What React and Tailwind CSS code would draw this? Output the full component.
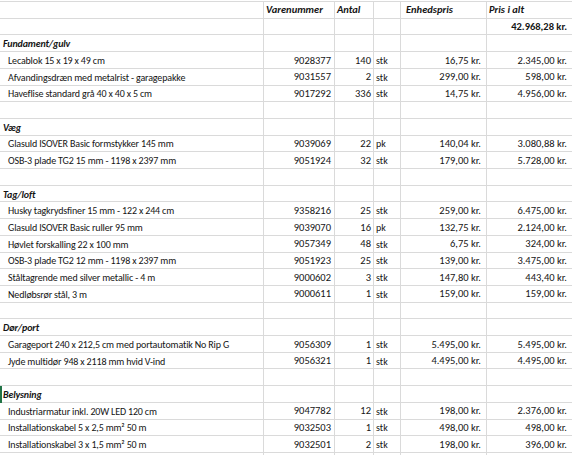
import React from "react";

const rows = [
  { t: "header" },
  { t: "total" },
  { t: "sec", name: "Fundament/gulv" },
  { t: "item", d: ["Lecablok 15 x 19 x 49 cm", "9028377", "140", "stk", "16,75 kr.", "2.345,00 kr."] },
  { t: "item", d: ["Afvandingsdræn med metalrist - garagepakke", "9031557", "2", "stk", "299,00 kr.", "598,00 kr."] },
  { t: "item", d: ["Haveflise standard grå 40 x 40 x 5 cm", "9017292", "336", "stk", "14,75 kr.", "4.956,00 kr."] },
  { t: "empty" },
  { t: "sec", name: "Væg" },
  { t: "item", d: ["Glasuld ISOVER Basic formstykker 145 mm", "9039069", "22", "pk", "140,04 kr.", "3.080,88 kr."] },
  { t: "item", d: ["OSB-3 plade TG2 15 mm - 1198 x 2397 mm", "9051924", "32", "stk", "179,00 kr.", "5.728,00 kr."] },
  { t: "empty" },
  { t: "sec", name: "Tag/loft" },
  { t: "item", d: ["Husky tagkrydsfiner 15 mm - 122 x 244 cm", "9358216", "25", "stk", "259,00 kr.", "6.475,00 kr."] },
  { t: "item", d: ["Glasuld ISOVER Basic ruller 95 mm", "9039070", "16", "pk", "132,75 kr.", "2.124,00 kr."] },
  { t: "item", d: ["Høvlet forskalling 22 x 100 mm", "9057349", "48", "stk", "6,75 kr.", "324,00 kr."] },
  { t: "item", d: ["OSB-3 plade TG2 12 mm - 1198 x 2397 mm", "9051923", "25", "stk", "139,00 kr.", "3.475,00 kr."] },
  { t: "item", d: ["Ståltagrende med silver metallic - 4 m", "9000602", "3", "stk", "147,80 kr.", "443,40 kr."] },
  { t: "item", d: ["Nedløbsrør stål, 3 m", "9000611", "1", "stk", "159,00 kr.", "159,00 kr."] },
  { t: "empty" },
  { t: "sec", name: "Dør/port" },
  { t: "item", d: ["Garageport 240 x 212,5 cm med portautomatik No Rip G", "9056309", "1", "stk", "5.495,00 kr.", "5.495,00 kr."] },
  { t: "item", d: ["Jyde multidør 948 x 2118 mm hvid V-ind", "9056321", "1", "stk", "4.495,00 kr.", "4.495,00 kr."] },
  { t: "empty" },
  { t: "sec", name: "Belysning", mark: true },
  { t: "item", d: ["Industriarmatur inkl. 20W LED 120 cm", "9047782", "12", "stk", "198,00 kr.", "2.376,00 kr."] },
  { t: "item", d: ["Installationskabel 5 x 2,5 mm² 50 m", "9032503", "1", "stk", "498,00 kr.", "498,00 kr."] },
  { t: "item", d: ["Installationskabel 3 x 1,5 mm² 50 m", "9032501", "2", "stk", "198,00 kr.", "396,00 kr."] },
  { t: "empty" },
];

const cell = "border-r border-b border-[#dadada] overflow-hidden whitespace-nowrap flex items-center pt-[1px]";

function Row({ r }) {
  const d = r.d || ["", "", "", "", "", ""];
  const hdr = r.t === "header";
  return (
    <div className="grid grid-cols-[264px_71px_39px_27px_86px_1fr] h-[16.71px] relative">
      {r.mark && <div className="absolute left-0 top-0 bottom-0 w-[2px] bg-[#217346]" />}
      <div
        className={`${cell} text-[10px] tracking-[-0.15px] ${
          r.t === "sec" ? "pl-[3px] font-bold italic tracking-[-0.2px]" : "pl-[8px]"
        }`}
      >
        {r.t === "sec" ? r.name : d[0]}
      </div>
      <div className={`${cell} ${hdr ? "pl-[2px] font-bold italic text-[10.5px]" : "justify-end pr-[3px]"}`}>
        {hdr ? "Varenummer" : d[1]}
      </div>
      <div className={`${cell} ${hdr ? "pl-[2px] font-bold italic text-[10.5px]" : "justify-end pr-[2px]"}`}>
        {hdr ? "Antal" : d[2]}
      </div>
      <div className={`${cell} pl-[2px] text-[10px]`}>{hdr ? "" : d[3]}</div>
      <div className={`${cell} ${hdr ? "pl-[5px] font-bold italic text-[10.5px]" : "justify-end pr-[5px]"}`}>
        {hdr ? "Enhedspris" : d[4]}
      </div>
      <div
        className={`${cell} border-r-0 ${hdr ? "pl-[2px] font-bold italic text-[10.5px]" : "justify-end pr-[5px]"} ${
          r.t === "total" ? "font-bold" : ""
        }`}
      >
        {hdr ? "Pris i alt" : r.t === "total" ? "42.968,28 kr." : d[5]}
      </div>
    </div>
  );
}

export default function App() {
  return (
    <div
      className="w-[572px] h-[455px] overflow-hidden bg-white text-[#151515] text-[10.5px] pt-[1px]"
      style={{ fontFamily: "Carlito, Lato, 'Open Sans', sans-serif" }}
    >
      <div className="border-t border-[#dadada]">
        {rows.map((r, i) => (
          <Row key={i} r={r} />
        ))}
      </div>
    </div>
  );
}
